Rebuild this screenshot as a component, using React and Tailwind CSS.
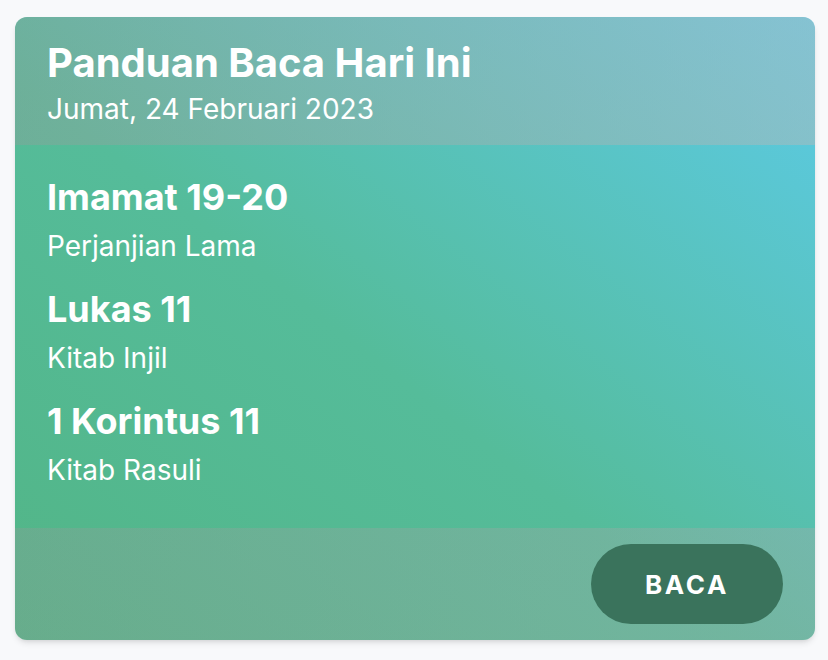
import React from "react";

const readings = [
  { passage: "Imamat 19-20", book: "Perjanjian Lama" },
  { passage: "Lukas 11", book: "Kitab Injil" },
  { passage: "1 Korintus 11", book: "Kitab Rasuli" },
];

function App() {
  return (
    <div
      className="min-h-screen bg-[#f8f9fb] pl-[15px] pt-[17px]"
      style={{ fontFamily: "Inter, 'Noto Sans', sans-serif" }}
    >
      <div className="w-[800px] h-[623px] rounded-xl overflow-hidden shadow-md shadow-black/10 bg-linear-to-tr/srgb from-[#52b586] via-[#55bc9a] via-45% to-[#5ccbe8] text-white flex flex-col">
        <div className="bg-linear-to-r from-[#9a9a9a]/35 to-[#b8b8b8]/45 px-8 pt-6 pb-5">
          <h1 className="text-[40px] leading-[44px] font-bold">
            Panduan Baca Hari Ini
          </h1>
          <p className="mt-2 text-[28px] leading-[32px]">Jumat, 24 Februari 2023</p>
        </div>

        <div className="flex-1 px-8 pt-8 flex flex-col gap-[27px]">
          {readings.map((r) => (
            <div key={r.passage}>
              <h2 className="text-[36px] leading-[40px] font-bold">{r.passage}</h2>
              <p className="mt-[13px] text-[28px] leading-[32px]">{r.book}</p>
            </div>
          ))}
        </div>

        <div className="bg-linear-to-r from-[#999999]/30 to-[#aaaaaa]/35 h-[112px] px-8 flex items-center justify-end">
          <button className="w-[192px] h-[80px] rounded-full bg-[#3a735c] text-[26px] font-bold tracking-widest">
            BACA
          </button>
        </div>
      </div>
    </div>
  );
}

export default App;
